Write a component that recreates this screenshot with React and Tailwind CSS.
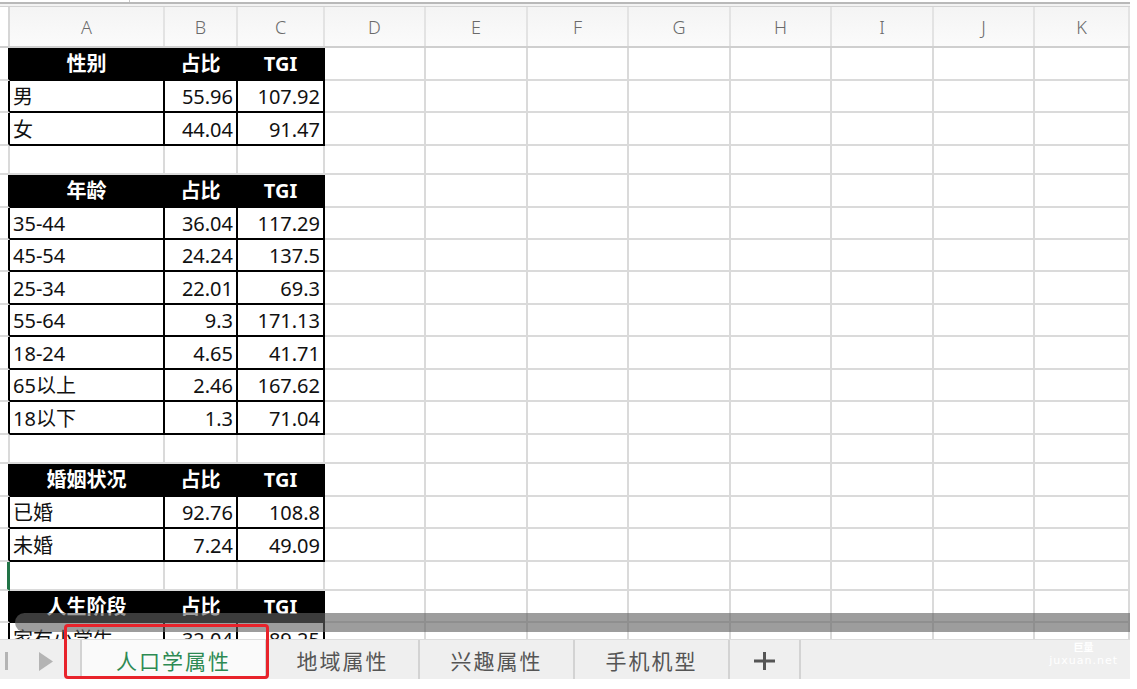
import React from 'react';

const COLS = [
  { id: 'A', w: 'w-[155px]' },
  { id: 'B', w: 'w-[73px]' },
  { id: 'C', w: 'w-[87px]' },
  { id: 'D', w: 'w-[101px]' },
  { id: 'E', w: 'w-[102px]' },
  { id: 'F', w: 'w-[101px]' },
  { id: 'G', w: 'w-[102px]' },
  { id: 'H', w: 'w-[101px]' },
  { id: 'I', w: 'w-[102px]' },
  { id: 'J', w: 'w-[101px]' },
  { id: 'K', w: 'w-[95px]' },
];

const ROWS = [
  { type: 'head', h: 'h-[33px]', cells: ['性别', '占比', 'TGI'] },
  { type: 'data', h: 'h-[32px]', cells: ['男', '55.96', '107.92'] },
  { type: 'data', h: 'h-[33px]', cells: ['女', '44.04', '91.47'] },
  { type: 'blank', h: 'h-[29px]' },
  { type: 'head', h: 'h-[33px]', cells: ['年龄', '占比', 'TGI'] },
  { type: 'data', h: 'h-[32px]', cells: ['35-44', '36.04', '117.29'] },
  { type: 'data', h: 'h-[32px]', cells: ['45-54', '24.24', '137.5'] },
  { type: 'data', h: 'h-[33px]', cells: ['25-34', '22.01', '69.3'] },
  { type: 'data', h: 'h-[32px]', cells: ['55-64', '9.3', '171.13'] },
  { type: 'data', h: 'h-[33px]', cells: ['18-24', '4.65', '41.71'] },
  { type: 'data', h: 'h-[32px]', cells: ['65以上', '2.46', '167.62'] },
  { type: 'data', h: 'h-[33px]', cells: ['18以下', '1.3', '71.04'] },
  { type: 'blank', h: 'h-[29px]' },
  { type: 'head', h: 'h-[33px]', cells: ['婚姻状况', '占比', 'TGI'] },
  { type: 'data', h: 'h-[32px]', cells: ['已婚', '92.76', '108.8'] },
  { type: 'data', h: 'h-[33px]', cells: ['未婚', '7.24', '49.09'] },
  { type: 'blank', h: 'h-[29px]', selected: true },
  { type: 'head', h: 'h-[32px]', cells: ['人生阶段', '占比', 'TGI'] },
  { type: 'data', h: 'h-[33px]', cells: ['家有小学生', '32.04', '89.25'] },
];

const TABS = [
  { label: '地域属性', w: 'w-[153px]' },
  { label: '兴趣属性', w: 'w-[155px]' },
  { label: '手机机型', w: 'w-[155px]' },
];

function Row({ row }) {
  const inTable = row.type !== 'blank';
  return (
    <div className={`flex ${row.h}`}>
      {/* row header stub */}
      <div
        className={`w-[10px] shrink-0 border-b-2 border-b-[#dadada] ${
          row.selected
            ? 'border-r-[3px] border-r-[#217346]'
            : inTable
            ? 'border-r-2 border-r-black'
            : 'border-r-2 border-r-[#dadada]'
        }`}
      ></div>

      {COLS.map((col, i) => {
        if (i < 3 && inTable) {
          const text = row.cells[i];
          if (row.type === 'head') {
            return (
              <div
                key={col.id}
                className={`${col.w} shrink-0 bg-black border-r-2 border-b-2 border-black flex items-center justify-center pt-[1px] text-white font-bold text-[20px] leading-none font-['Noto_Sans','Noto_Sans_CJK_SC',sans-serif]`}
              >
                {text}
              </div>
            );
          }
          return (
            <div
              key={col.id}
              className={`${col.w} shrink-0 border-r-2 border-b-2 border-black flex items-center pt-[2px] text-[20px] leading-none text-[#111] font-['Noto_Sans','Noto_Sans_CJK_SC',sans-serif] ${
                i === 0 ? 'justify-start pl-[3px]' : 'justify-end pr-[3px]'
              }`}
            >
              {text}
            </div>
          );
        }
        return (
          <div
            key={col.id}
            className={`${col.w} shrink-0 border-r-2 border-b-2 border-[#dadada]`}
          ></div>
        );
      })}
    </div>
  );
}

export default function App() {
  return (
    <div className="relative w-[1137px] h-[689px] bg-white overflow-hidden font-['Noto_Sans','Noto_Sans_CJK_SC',sans-serif]">
      <div className="w-[1130px] flex flex-col">
        {/* top strip */}
        <div className="h-[2px] bg-white relative">
          <div className="absolute left-[129px] top-0 w-px h-[2px] bg-[#c8c8c8]"></div>
        </div>
        <div className="h-[2px] bg-[#b9b9b9]"></div>
        <div className="h-[3px] bg-[#f3f3f3] border-b border-[#d2d2d2]"></div>

        {/* column headers */}
        <div className="flex h-[41px] bg-gradient-to-b from-[#f4f4f4] to-[#fbfbfb] border-b-2 border-[#cfcfcf]">
          <div className="w-[10px] shrink-0 bg-white border-r-2 border-[#d6d6d6]"></div>
          {COLS.map((col) => (
            <div
              key={col.id}
              className={`${col.w} shrink-0 border-r-2 border-[#e3e3e3] flex items-center justify-center pt-[2px] text-[18px] text-[#6a6a6a] font-light`}
            >
              {col.id}
            </div>
          ))}
        </div>

        {/* cells */}
        <div className="relative h-[591px] overflow-hidden">
          {ROWS.map((row, i) => (
            <Row key={i} row={row} />
          ))}
          {/* floating horizontal scrollbar */}
          <div className="absolute left-[15px] right-0 top-[565px] h-[19px] rounded-l-full bg-[rgba(97,97,97,0.62)]"></div>
        </div>

        {/* sheet tabs */}
        <div className="relative flex h-[40px] bg-[#efefef] border-t border-[#dcdcdc] font-['Noto_Sans_CJK_SC',sans-serif]">
          <div className="w-[82px] shrink-0 flex items-center pt-[3px] border-r-2 border-[#d3d3d3]">
            <div className="ml-[5px] w-[3px] h-[18px] bg-[#b4b4b4]"></div>
            <svg width="14" height="19" viewBox="0 0 14 19" className="ml-[31px]">
              <path d="M0 0 L14 9.5 L0 19 Z" fill="#b4b4b4" />
            </svg>
          </div>
          <div className="w-[183px] shrink-0 bg-[#fafafa] flex items-center justify-center pt-[3px] text-[21px] text-[#2d8a53] tracking-[2px]">
            人口学属性
          </div>
          {TABS.map((t) => (
            <div
              key={t.label}
              className={`${t.w} shrink-0 border-l-2 border-[#d3d3d3] flex items-center justify-center pt-[3px] text-[21px] text-[#555] tracking-[2px]`}
            >
              {t.label}
            </div>
          ))}
          <div className="w-[73px] shrink-0 border-x-2 border-[#d3d3d3] flex items-center justify-center pt-[3px]">
            <svg width="21" height="18" viewBox="0 0 21 18">
              <path d="M10.5 0 V18 M0 9 H21" stroke="#555" strokeWidth="3" />
            </svg>
          </div>
          <div className="flex-1"></div>
          {/* watermark */}
          <div className="absolute right-[12px] top-[2px] flex flex-col items-center text-white leading-none">
            <span className="text-[10px] font-bold">巨量</span>
            <span className="mt-[3px] text-[11px] tracking-[1px] font-['DejaVu_Sans',sans-serif]">juxuan.net</span>
          </div>
        </div>
      </div>

      {/* red highlight around active tab */}
      <div className="absolute left-[64px] top-[624px] w-[205px] h-[55px] border-[3px] border-[#e8232b] rounded-[4px]"></div>
    </div>
  );
}
